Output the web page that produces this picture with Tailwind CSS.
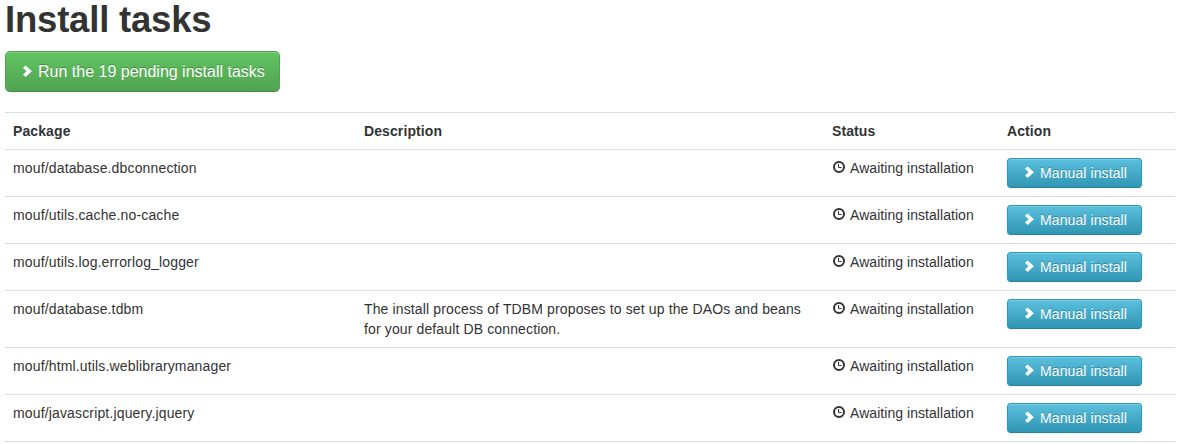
<!DOCTYPE html>
<html lang="en"><head><meta charset="utf-8"><title>Install tasks</title>
<script src="https://cdn.jsdelivr.net/npm/@tailwindcss/browser@4"></script></head>
<body class="h-[444px] overflow-hidden bg-white pl-[5px] text-sm leading-5 text-[#333] font-['Liberation_Sans',Arial,sans-serif]">
<svg class="hidden"><defs>
<symbol id="chevron" viewBox="0 0 10 12"><path d="M0 2.8 2.6.4 8.9 6.2 2.6 12 0 9.6 3.6 6.2Z" fill="currentColor"/></symbol>
<symbol id="clock" viewBox="0 0 12 12"><circle cx="6" cy="6" r="5" fill="none" stroke="currentColor" stroke-width="2"/><path d="M5.5 3v3.5H8.5" fill="none" stroke="currentColor" stroke-width="1"/></symbol>
</defs></svg>
<h1 class="h-[51px] text-[36.5px] leading-10 font-bold tracking-[-.2px]">Install tasks</h1>
<button class="flex h-[41px] w-[275px] items-center rounded-[5px] border border-[#51a351] border-b-[#458a45] bg-linear-to-b from-[#62c462] to-[#51a351] pl-[17px] text-base text-white whitespace-nowrap shadow-[inset_0_1px_0_rgba(255,255,255,.2),0_1px_2px_rgba(0,0,0,.05)] text-shadow-[0_-1px_0_rgba(0,0,0,.25)]"><svg class="mr-[5px] mb-0.5 h-3 w-2.5"><use href="#chevron"/></svg>Run the 19 pending install tasks</button>
<table class="mt-5 w-[1170px] table-fixed border-collapse text-left">
<colgroup><col class="w-[351px]"><col class="w-[468px]"><col class="w-[175px]"><col class="w-[176px]"></colgroup>
<thead><tr class="h-[37px] border-t border-[#ddd] tracking-[.1px]"><th class="px-2">Package</th><th class="px-2">Description</th><th class="px-2">Status</th><th class="px-2">Action</th></tr></thead>
<tbody id="rows" class="align-top"></tbody></table>
<template id="row"><tr class="border-y border-[#ddd]"><td class="p-2 tracking-[.15px]"></td><td class="p-2 tracking-[.13px]"></td>
<td class="p-2"><div class="flex items-center whitespace-nowrap tracking-[.05px]"><svg class="mr-[5px] ml-px mb-[3px] h-3 w-3"><use href="#clock"/></svg><span>Awaiting installation</span></div></td>
<td class="p-2"><button class="flex h-[30px] w-[135px] items-center rounded-[4px] border border-[#2f96b4] border-b-[#28809a] bg-linear-to-b from-[#5bc0de] to-[#2f96b4] pl-[17px] text-white whitespace-nowrap tracking-[.1px] shadow-[inset_0_1px_0_rgba(255,255,255,.2),0_1px_2px_rgba(0,0,0,.05)] text-shadow-[0_-1px_0_rgba(0,0,0,.25)]"><svg class="mr-[5px] mb-0.5 h-3 w-2.5"><use href="#chevron"/></svg><span>Manual install</span></button></td></tr></template>
<script>
const tasks = [
  ["mouf/database.dbconnection", ""],
  ["mouf/utils.cache.no-cache", ""],
  ["mouf/utils.log.errorlog_logger", ""],
  ["mouf/database.tdbm", "The install process of TDBM proposes to set up the DAOs and beans for your default DB connection."],
  ["mouf/html.utils.weblibrarymanager", ""],
  ["mouf/javascript.jquery.jquery", ""]
];
for (const [name, description] of tasks) {
  const row = document.getElementById("row").content.cloneNode(true);
  const cells = row.querySelectorAll("td");
  cells[0].textContent = name;
  cells[1].textContent = description;
  document.getElementById("rows").append(row);
}
</script>
</body></html>
